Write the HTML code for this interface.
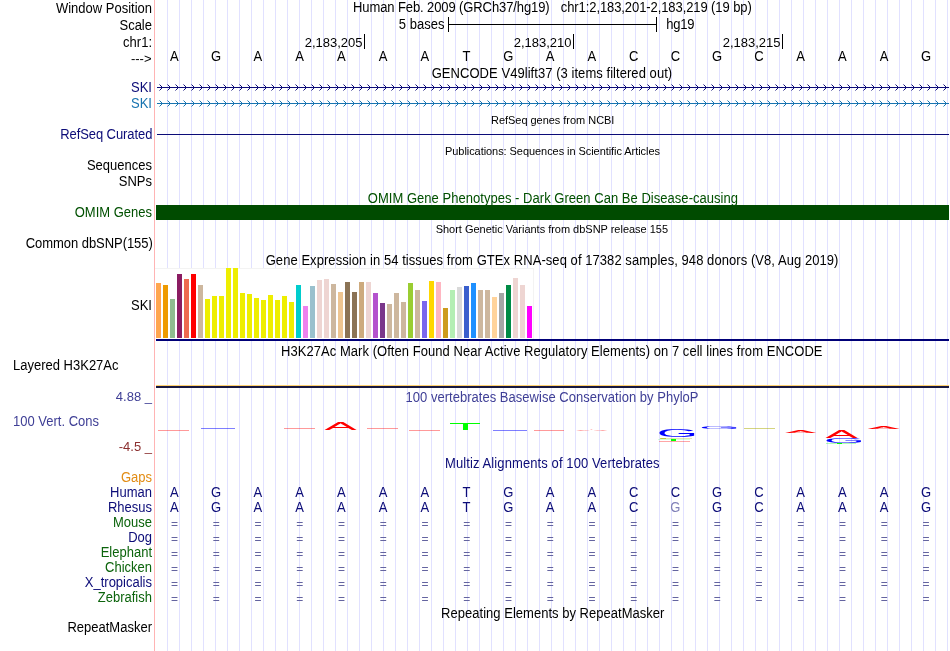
<!DOCTYPE html>
<html><head><meta charset="utf-8"><title>UCSC Genome Browser</title>
<style>
html,body{margin:0;padding:0;background:#fff;}
#c{will-change:transform;position:relative;width:950px;height:651px;overflow:hidden;background:#fff;font-family:"Liberation Sans",sans-serif;}
#c svg{position:absolute;left:0;top:0;}
.t{position:absolute;white-space:nowrap;transform:scaleY(1.075);}
</style></head><body><div id="c">
<svg width="950" height="651" viewBox="0 0 950 651" shape-rendering="auto">
<rect x="167" y="0" width="1" height="651" fill="#e1e1ff"/>
<rect x="179" y="0" width="1" height="651" fill="#e1e1ff"/>
<rect x="191" y="0" width="1" height="651" fill="#e1e1ff"/>
<rect x="203" y="0" width="1" height="651" fill="#e1e1ff"/>
<rect x="215" y="0" width="1" height="651" fill="#e1e1ff"/>
<rect x="227" y="0" width="1" height="651" fill="#e1e1ff"/>
<rect x="239" y="0" width="1" height="651" fill="#e1e1ff"/>
<rect x="251" y="0" width="1" height="651" fill="#e1e1ff"/>
<rect x="263" y="0" width="1" height="651" fill="#e1e1ff"/>
<rect x="275" y="0" width="1" height="651" fill="#e1e1ff"/>
<rect x="287" y="0" width="1" height="651" fill="#e1e1ff"/>
<rect x="299" y="0" width="1" height="651" fill="#e1e1ff"/>
<rect x="311" y="0" width="1" height="651" fill="#e1e1ff"/>
<rect x="323" y="0" width="1" height="651" fill="#e1e1ff"/>
<rect x="335" y="0" width="1" height="651" fill="#e1e1ff"/>
<rect x="347" y="0" width="1" height="651" fill="#e1e1ff"/>
<rect x="359" y="0" width="1" height="651" fill="#e1e1ff"/>
<rect x="371" y="0" width="1" height="651" fill="#e1e1ff"/>
<rect x="383" y="0" width="1" height="651" fill="#e1e1ff"/>
<rect x="395" y="0" width="1" height="651" fill="#e1e1ff"/>
<rect x="407" y="0" width="1" height="651" fill="#e1e1ff"/>
<rect x="419" y="0" width="1" height="651" fill="#e1e1ff"/>
<rect x="431" y="0" width="1" height="651" fill="#e1e1ff"/>
<rect x="443" y="0" width="1" height="651" fill="#e1e1ff"/>
<rect x="455" y="0" width="1" height="651" fill="#e1e1ff"/>
<rect x="467" y="0" width="1" height="651" fill="#e1e1ff"/>
<rect x="479" y="0" width="1" height="651" fill="#e1e1ff"/>
<rect x="491" y="0" width="1" height="651" fill="#e1e1ff"/>
<rect x="503" y="0" width="1" height="651" fill="#e1e1ff"/>
<rect x="515" y="0" width="1" height="651" fill="#e1e1ff"/>
<rect x="527" y="0" width="1" height="651" fill="#e1e1ff"/>
<rect x="539" y="0" width="1" height="651" fill="#e1e1ff"/>
<rect x="551" y="0" width="1" height="651" fill="#e1e1ff"/>
<rect x="563" y="0" width="1" height="651" fill="#e1e1ff"/>
<rect x="575" y="0" width="1" height="651" fill="#e1e1ff"/>
<rect x="587" y="0" width="1" height="651" fill="#e1e1ff"/>
<rect x="599" y="0" width="1" height="651" fill="#e1e1ff"/>
<rect x="611" y="0" width="1" height="651" fill="#e1e1ff"/>
<rect x="623" y="0" width="1" height="651" fill="#e1e1ff"/>
<rect x="635" y="0" width="1" height="651" fill="#e1e1ff"/>
<rect x="647" y="0" width="1" height="651" fill="#e1e1ff"/>
<rect x="659" y="0" width="1" height="651" fill="#e1e1ff"/>
<rect x="671" y="0" width="1" height="651" fill="#e1e1ff"/>
<rect x="683" y="0" width="1" height="651" fill="#e1e1ff"/>
<rect x="695" y="0" width="1" height="651" fill="#e1e1ff"/>
<rect x="707" y="0" width="1" height="651" fill="#e1e1ff"/>
<rect x="719" y="0" width="1" height="651" fill="#e1e1ff"/>
<rect x="731" y="0" width="1" height="651" fill="#e1e1ff"/>
<rect x="743" y="0" width="1" height="651" fill="#e1e1ff"/>
<rect x="755" y="0" width="1" height="651" fill="#e1e1ff"/>
<rect x="767" y="0" width="1" height="651" fill="#e1e1ff"/>
<rect x="779" y="0" width="1" height="651" fill="#e1e1ff"/>
<rect x="791" y="0" width="1" height="651" fill="#e1e1ff"/>
<rect x="803" y="0" width="1" height="651" fill="#e1e1ff"/>
<rect x="815" y="0" width="1" height="651" fill="#e1e1ff"/>
<rect x="827" y="0" width="1" height="651" fill="#e1e1ff"/>
<rect x="839" y="0" width="1" height="651" fill="#e1e1ff"/>
<rect x="851" y="0" width="1" height="651" fill="#e1e1ff"/>
<rect x="863" y="0" width="1" height="651" fill="#e1e1ff"/>
<rect x="875" y="0" width="1" height="651" fill="#e1e1ff"/>
<rect x="887" y="0" width="1" height="651" fill="#e1e1ff"/>
<rect x="899" y="0" width="1" height="651" fill="#e1e1ff"/>
<rect x="911" y="0" width="1" height="651" fill="#e1e1ff"/>
<rect x="923" y="0" width="1" height="651" fill="#e1e1ff"/>
<rect x="935" y="0" width="1" height="651" fill="#e1e1ff"/>
<rect x="947" y="0" width="1" height="651" fill="#e1e1ff"/>
<rect x="154" y="0" width="1" height="651" fill="#ffb4b4"/>
<rect x="448" y="24" width="209" height="1" fill="#000"/>
<rect x="448" y="17" width="1" height="15" fill="#000"/>
<rect x="656" y="17" width="1" height="15" fill="#000"/>
<rect x="364" y="34" width="1" height="15" fill="#000"/>
<rect x="573" y="34" width="1" height="15" fill="#000"/>
<rect x="782" y="34" width="1" height="15" fill="#000"/>
<rect x="157" y="87" width="792" height="1" fill="#0c0c78"/>
<path d="M159.5,84.5L162.5,87.5L159.5,90.5M167.5,84.5L170.5,87.5L167.5,90.5M175.5,84.5L178.5,87.5L175.5,90.5M183.5,84.5L186.5,87.5L183.5,90.5M191.5,84.5L194.5,87.5L191.5,90.5M199.5,84.5L202.5,87.5L199.5,90.5M207.5,84.5L210.5,87.5L207.5,90.5M215.5,84.5L218.5,87.5L215.5,90.5M223.5,84.5L226.5,87.5L223.5,90.5M231.5,84.5L234.5,87.5L231.5,90.5M239.5,84.5L242.5,87.5L239.5,90.5M247.5,84.5L250.5,87.5L247.5,90.5M255.5,84.5L258.5,87.5L255.5,90.5M263.5,84.5L266.5,87.5L263.5,90.5M271.5,84.5L274.5,87.5L271.5,90.5M279.5,84.5L282.5,87.5L279.5,90.5M287.5,84.5L290.5,87.5L287.5,90.5M295.5,84.5L298.5,87.5L295.5,90.5M303.5,84.5L306.5,87.5L303.5,90.5M311.5,84.5L314.5,87.5L311.5,90.5M319.5,84.5L322.5,87.5L319.5,90.5M327.5,84.5L330.5,87.5L327.5,90.5M335.5,84.5L338.5,87.5L335.5,90.5M343.5,84.5L346.5,87.5L343.5,90.5M351.5,84.5L354.5,87.5L351.5,90.5M359.5,84.5L362.5,87.5L359.5,90.5M367.5,84.5L370.5,87.5L367.5,90.5M375.5,84.5L378.5,87.5L375.5,90.5M383.5,84.5L386.5,87.5L383.5,90.5M391.5,84.5L394.5,87.5L391.5,90.5M399.5,84.5L402.5,87.5L399.5,90.5M407.5,84.5L410.5,87.5L407.5,90.5M415.5,84.5L418.5,87.5L415.5,90.5M423.5,84.5L426.5,87.5L423.5,90.5M431.5,84.5L434.5,87.5L431.5,90.5M439.5,84.5L442.5,87.5L439.5,90.5M447.5,84.5L450.5,87.5L447.5,90.5M455.5,84.5L458.5,87.5L455.5,90.5M463.5,84.5L466.5,87.5L463.5,90.5M471.5,84.5L474.5,87.5L471.5,90.5M479.5,84.5L482.5,87.5L479.5,90.5M487.5,84.5L490.5,87.5L487.5,90.5M495.5,84.5L498.5,87.5L495.5,90.5M503.5,84.5L506.5,87.5L503.5,90.5M511.5,84.5L514.5,87.5L511.5,90.5M519.5,84.5L522.5,87.5L519.5,90.5M527.5,84.5L530.5,87.5L527.5,90.5M535.5,84.5L538.5,87.5L535.5,90.5M543.5,84.5L546.5,87.5L543.5,90.5M551.5,84.5L554.5,87.5L551.5,90.5M559.5,84.5L562.5,87.5L559.5,90.5M567.5,84.5L570.5,87.5L567.5,90.5M575.5,84.5L578.5,87.5L575.5,90.5M583.5,84.5L586.5,87.5L583.5,90.5M591.5,84.5L594.5,87.5L591.5,90.5M599.5,84.5L602.5,87.5L599.5,90.5M607.5,84.5L610.5,87.5L607.5,90.5M615.5,84.5L618.5,87.5L615.5,90.5M623.5,84.5L626.5,87.5L623.5,90.5M631.5,84.5L634.5,87.5L631.5,90.5M639.5,84.5L642.5,87.5L639.5,90.5M647.5,84.5L650.5,87.5L647.5,90.5M655.5,84.5L658.5,87.5L655.5,90.5M663.5,84.5L666.5,87.5L663.5,90.5M671.5,84.5L674.5,87.5L671.5,90.5M679.5,84.5L682.5,87.5L679.5,90.5M687.5,84.5L690.5,87.5L687.5,90.5M695.5,84.5L698.5,87.5L695.5,90.5M703.5,84.5L706.5,87.5L703.5,90.5M711.5,84.5L714.5,87.5L711.5,90.5M719.5,84.5L722.5,87.5L719.5,90.5M727.5,84.5L730.5,87.5L727.5,90.5M735.5,84.5L738.5,87.5L735.5,90.5M743.5,84.5L746.5,87.5L743.5,90.5M751.5,84.5L754.5,87.5L751.5,90.5M759.5,84.5L762.5,87.5L759.5,90.5M767.5,84.5L770.5,87.5L767.5,90.5M775.5,84.5L778.5,87.5L775.5,90.5M783.5,84.5L786.5,87.5L783.5,90.5M791.5,84.5L794.5,87.5L791.5,90.5M799.5,84.5L802.5,87.5L799.5,90.5M807.5,84.5L810.5,87.5L807.5,90.5M815.5,84.5L818.5,87.5L815.5,90.5M823.5,84.5L826.5,87.5L823.5,90.5M831.5,84.5L834.5,87.5L831.5,90.5M839.5,84.5L842.5,87.5L839.5,90.5M847.5,84.5L850.5,87.5L847.5,90.5M855.5,84.5L858.5,87.5L855.5,90.5M863.5,84.5L866.5,87.5L863.5,90.5M871.5,84.5L874.5,87.5L871.5,90.5M879.5,84.5L882.5,87.5L879.5,90.5M887.5,84.5L890.5,87.5L887.5,90.5M895.5,84.5L898.5,87.5L895.5,90.5M903.5,84.5L906.5,87.5L903.5,90.5M911.5,84.5L914.5,87.5L911.5,90.5M919.5,84.5L922.5,87.5L919.5,90.5M927.5,84.5L930.5,87.5L927.5,90.5M935.5,84.5L938.5,87.5L935.5,90.5M943.5,84.5L946.5,87.5L943.5,90.5" stroke="#0c0c78" stroke-width="1" fill="none"/>
<rect x="157" y="103" width="792" height="1" fill="#1874b0"/>
<path d="M159.5,100.5L162.5,103.5L159.5,106.5M167.5,100.5L170.5,103.5L167.5,106.5M175.5,100.5L178.5,103.5L175.5,106.5M183.5,100.5L186.5,103.5L183.5,106.5M191.5,100.5L194.5,103.5L191.5,106.5M199.5,100.5L202.5,103.5L199.5,106.5M207.5,100.5L210.5,103.5L207.5,106.5M215.5,100.5L218.5,103.5L215.5,106.5M223.5,100.5L226.5,103.5L223.5,106.5M231.5,100.5L234.5,103.5L231.5,106.5M239.5,100.5L242.5,103.5L239.5,106.5M247.5,100.5L250.5,103.5L247.5,106.5M255.5,100.5L258.5,103.5L255.5,106.5M263.5,100.5L266.5,103.5L263.5,106.5M271.5,100.5L274.5,103.5L271.5,106.5M279.5,100.5L282.5,103.5L279.5,106.5M287.5,100.5L290.5,103.5L287.5,106.5M295.5,100.5L298.5,103.5L295.5,106.5M303.5,100.5L306.5,103.5L303.5,106.5M311.5,100.5L314.5,103.5L311.5,106.5M319.5,100.5L322.5,103.5L319.5,106.5M327.5,100.5L330.5,103.5L327.5,106.5M335.5,100.5L338.5,103.5L335.5,106.5M343.5,100.5L346.5,103.5L343.5,106.5M351.5,100.5L354.5,103.5L351.5,106.5M359.5,100.5L362.5,103.5L359.5,106.5M367.5,100.5L370.5,103.5L367.5,106.5M375.5,100.5L378.5,103.5L375.5,106.5M383.5,100.5L386.5,103.5L383.5,106.5M391.5,100.5L394.5,103.5L391.5,106.5M399.5,100.5L402.5,103.5L399.5,106.5M407.5,100.5L410.5,103.5L407.5,106.5M415.5,100.5L418.5,103.5L415.5,106.5M423.5,100.5L426.5,103.5L423.5,106.5M431.5,100.5L434.5,103.5L431.5,106.5M439.5,100.5L442.5,103.5L439.5,106.5M447.5,100.5L450.5,103.5L447.5,106.5M455.5,100.5L458.5,103.5L455.5,106.5M463.5,100.5L466.5,103.5L463.5,106.5M471.5,100.5L474.5,103.5L471.5,106.5M479.5,100.5L482.5,103.5L479.5,106.5M487.5,100.5L490.5,103.5L487.5,106.5M495.5,100.5L498.5,103.5L495.5,106.5M503.5,100.5L506.5,103.5L503.5,106.5M511.5,100.5L514.5,103.5L511.5,106.5M519.5,100.5L522.5,103.5L519.5,106.5M527.5,100.5L530.5,103.5L527.5,106.5M535.5,100.5L538.5,103.5L535.5,106.5M543.5,100.5L546.5,103.5L543.5,106.5M551.5,100.5L554.5,103.5L551.5,106.5M559.5,100.5L562.5,103.5L559.5,106.5M567.5,100.5L570.5,103.5L567.5,106.5M575.5,100.5L578.5,103.5L575.5,106.5M583.5,100.5L586.5,103.5L583.5,106.5M591.5,100.5L594.5,103.5L591.5,106.5M599.5,100.5L602.5,103.5L599.5,106.5M607.5,100.5L610.5,103.5L607.5,106.5M615.5,100.5L618.5,103.5L615.5,106.5M623.5,100.5L626.5,103.5L623.5,106.5M631.5,100.5L634.5,103.5L631.5,106.5M639.5,100.5L642.5,103.5L639.5,106.5M647.5,100.5L650.5,103.5L647.5,106.5M655.5,100.5L658.5,103.5L655.5,106.5M663.5,100.5L666.5,103.5L663.5,106.5M671.5,100.5L674.5,103.5L671.5,106.5M679.5,100.5L682.5,103.5L679.5,106.5M687.5,100.5L690.5,103.5L687.5,106.5M695.5,100.5L698.5,103.5L695.5,106.5M703.5,100.5L706.5,103.5L703.5,106.5M711.5,100.5L714.5,103.5L711.5,106.5M719.5,100.5L722.5,103.5L719.5,106.5M727.5,100.5L730.5,103.5L727.5,106.5M735.5,100.5L738.5,103.5L735.5,106.5M743.5,100.5L746.5,103.5L743.5,106.5M751.5,100.5L754.5,103.5L751.5,106.5M759.5,100.5L762.5,103.5L759.5,106.5M767.5,100.5L770.5,103.5L767.5,106.5M775.5,100.5L778.5,103.5L775.5,106.5M783.5,100.5L786.5,103.5L783.5,106.5M791.5,100.5L794.5,103.5L791.5,106.5M799.5,100.5L802.5,103.5L799.5,106.5M807.5,100.5L810.5,103.5L807.5,106.5M815.5,100.5L818.5,103.5L815.5,106.5M823.5,100.5L826.5,103.5L823.5,106.5M831.5,100.5L834.5,103.5L831.5,106.5M839.5,100.5L842.5,103.5L839.5,106.5M847.5,100.5L850.5,103.5L847.5,106.5M855.5,100.5L858.5,103.5L855.5,106.5M863.5,100.5L866.5,103.5L863.5,106.5M871.5,100.5L874.5,103.5L871.5,106.5M879.5,100.5L882.5,103.5L879.5,106.5M887.5,100.5L890.5,103.5L887.5,106.5M895.5,100.5L898.5,103.5L895.5,106.5M903.5,100.5L906.5,103.5L903.5,106.5M911.5,100.5L914.5,103.5L911.5,106.5M919.5,100.5L922.5,103.5L919.5,106.5M927.5,100.5L930.5,103.5L927.5,106.5M935.5,100.5L938.5,103.5L935.5,106.5M943.5,100.5L946.5,103.5L943.5,106.5" stroke="#1874b0" stroke-width="1" fill="none"/>
<rect x="157" y="134" width="792" height="1" fill="#0c0c78"/>
<rect x="156" y="205" width="793" height="15" fill="#004b00"/>
<rect x="155" y="268" width="379" height="71" fill="#fff"/>
<rect x="155" y="268" width="379" height="1" fill="#f3f3f3"/>
<rect x="533" y="268" width="1" height="71" fill="#f3f3f3"/>
<rect x="156" y="283" width="5" height="55" fill="#FFA54F"/>
<rect x="163" y="285" width="5" height="53" fill="#EE9A00"/>
<rect x="170" y="299" width="5" height="39" fill="#8FBC8F"/>
<rect x="177" y="274" width="5" height="64" fill="#8B1C62"/>
<rect x="184" y="279" width="5" height="59" fill="#EE6A50"/>
<rect x="191" y="274" width="5" height="64" fill="#FF0000"/>
<rect x="198" y="285" width="5" height="53" fill="#CDB79E"/>
<rect x="205" y="299" width="5" height="39" fill="#EEEE00"/>
<rect x="212" y="296" width="5" height="42" fill="#EEEE00"/>
<rect x="219" y="296" width="5" height="42" fill="#EEEE00"/>
<rect x="226" y="268" width="5" height="70" fill="#EEEE00"/>
<rect x="233" y="268" width="5" height="70" fill="#EEEE00"/>
<rect x="240" y="293" width="5" height="45" fill="#EEEE00"/>
<rect x="247" y="294" width="5" height="44" fill="#EEEE00"/>
<rect x="254" y="298" width="5" height="40" fill="#EEEE00"/>
<rect x="261" y="300" width="5" height="38" fill="#EEEE00"/>
<rect x="268" y="295" width="5" height="43" fill="#EEEE00"/>
<rect x="275" y="300" width="5" height="38" fill="#EEEE00"/>
<rect x="282" y="296" width="5" height="42" fill="#EEEE00"/>
<rect x="289" y="302" width="5" height="36" fill="#EEEE00"/>
<rect x="296" y="285" width="5" height="53" fill="#00CDCD"/>
<rect x="303" y="306" width="5" height="32" fill="#EE82EE"/>
<rect x="310" y="286" width="5" height="52" fill="#9AC0CD"/>
<rect x="317" y="280" width="5" height="58" fill="#EED5D2"/>
<rect x="324" y="279" width="5" height="59" fill="#EED5D2"/>
<rect x="331" y="284" width="5" height="54" fill="#CDB79E"/>
<rect x="338" y="292" width="5" height="46" fill="#EEC591"/>
<rect x="345" y="282" width="5" height="56" fill="#8B7355"/>
<rect x="352" y="292" width="5" height="46" fill="#8B7355"/>
<rect x="359" y="282" width="5" height="56" fill="#CDAA7D"/>
<rect x="366" y="282" width="5" height="56" fill="#EED5D2"/>
<rect x="373" y="293" width="5" height="45" fill="#B452CD"/>
<rect x="380" y="303" width="5" height="35" fill="#7A378B"/>
<rect x="387" y="304" width="5" height="34" fill="#CDB79E"/>
<rect x="394" y="293" width="5" height="45" fill="#CDB79E"/>
<rect x="401" y="302" width="5" height="36" fill="#CDB79E"/>
<rect x="408" y="283" width="5" height="55" fill="#9ACD32"/>
<rect x="415" y="290" width="5" height="48" fill="#CDB79E"/>
<rect x="422" y="301" width="5" height="37" fill="#7A67EE"/>
<rect x="429" y="281" width="5" height="57" fill="#FFD700"/>
<rect x="436" y="282" width="5" height="56" fill="#FFB6C1"/>
<rect x="443" y="308" width="5" height="30" fill="#CD9B1D"/>
<rect x="450" y="290" width="5" height="48" fill="#B4EEB4"/>
<rect x="457" y="287" width="5" height="51" fill="#D9D9D9"/>
<rect x="464" y="286" width="5" height="52" fill="#3A5FCD"/>
<rect x="471" y="283" width="5" height="55" fill="#1E90FF"/>
<rect x="478" y="290" width="5" height="48" fill="#CDB79E"/>
<rect x="485" y="290" width="5" height="48" fill="#CDB79E"/>
<rect x="492" y="297" width="5" height="41" fill="#FFD39B"/>
<rect x="499" y="293" width="5" height="45" fill="#A6A6A6"/>
<rect x="506" y="285" width="5" height="53" fill="#008B45"/>
<rect x="513" y="278" width="5" height="60" fill="#EED5D2"/>
<rect x="520" y="285" width="5" height="53" fill="#EED5D2"/>
<rect x="527" y="306" width="5" height="32" fill="#FF00FF"/>
<rect x="156" y="339" width="793" height="2" fill="#000078"/>
<rect x="156" y="385" width="793" height="1" fill="#ffd070"/>
<rect x="156" y="386" width="793" height="2" fill="#181840"/>
<rect x="158.0" y="430" width="31.0" height="1" fill="#ff0000" opacity="0.4"/>
<rect x="201.0" y="428" width="34.0" height="1" fill="#0000ff" opacity="0.5"/>
<rect x="284.0" y="428" width="31.0" height="1" fill="#ff0000" opacity="0.4"/>
<text transform="translate(324.50,430.00) scale(2.413,0.509)" x="-0.04" y="0.00" font-size="20.0" font-family="Liberation Sans,sans-serif" fill="#ff0000">A</text>
<rect x="367.0" y="428" width="31.0" height="1" fill="#ff0000" opacity="0.4"/>
<rect x="409.0" y="430" width="31.0" height="1" fill="#ff0000" opacity="0.4"/>
<rect x="450" y="423" width="30" height="1" fill="#00ff00"/>
<rect x="463" y="424" width="5" height="6" fill="#00ff00"/>
<rect x="493.0" y="430" width="34.0" height="1" fill="#0000ff" opacity="0.5"/>
<rect x="534.0" y="430" width="30.0" height="1" fill="#ff0000" opacity="0.4"/>
<text transform="translate(576.00,431.40) scale(2.376,0.124)" x="-0.04" y="0.00" font-size="20.0" font-family="Liberation Sans,sans-serif" fill="#ff0000">A</text>
<text transform="translate(659.30,437.00) scale(2.657,0.544)" x="-1.00" y="-0.20" font-size="20.0" font-family="Liberation Sans,sans-serif" fill="#0000ff">G</text>
<rect x="661.0" y="438" width="31.0" height="1" fill="#aaaa00" opacity="0.3"/>
<rect x="660.0" y="438" width="6.0" height="1" fill="#aaaa00" opacity="0.6"/>
<rect x="658" y="439" width="32" height="1" fill="#00ff00" opacity="0.15"/>
<rect x="671" y="439" width="5" height="2" fill="#00ff00"/>
<rect x="659.0" y="441" width="31.0" height="1" fill="#ff0000" opacity="0.35"/>
<text transform="translate(701.50,429.00) scale(2.642,0.212)" x="-1.00" y="-0.20" font-size="20.0" font-family="Liberation Sans,sans-serif" fill="#0000ff">G</text>
<rect x="744.0" y="428" width="31.0" height="1" fill="#aaaa00" opacity="0.5"/>
<text transform="translate(785.00,433.00) scale(2.338,0.218)" x="-0.04" y="0.00" font-size="20.0" font-family="Liberation Sans,sans-serif" fill="#ff0000">A</text>
<text transform="translate(825.50,438.00) scale(2.413,0.581)" x="-0.04" y="0.00" font-size="20.0" font-family="Liberation Sans,sans-serif" fill="#ff0000">A</text>
<text transform="translate(826.50,443.00) scale(2.642,0.353)" x="-1.00" y="-0.20" font-size="20.0" font-family="Liberation Sans,sans-serif" fill="#0000ff">G</text>
<rect x="826" y="443" width="30" height="1" fill="#00ff00" opacity="0.3"/>
<rect x="837" y="443" width="5" height="1" fill="#00ff00"/>
<text transform="translate(867.50,429.00) scale(2.413,0.218)" x="-0.04" y="0.00" font-size="20.0" font-family="Liberation Sans,sans-serif" fill="#ff0000">A</text>
</svg>
<div class="t" style="top:1.00px;font-size:13px;line-height:15px;color:#000;transform-origin:0 12.00px;right:798px;">Window Position</div>
<div class="t" style="top:-0.00px;font-size:13px;line-height:15px;color:#000;transform-origin:0 12.00px;letter-spacing:-0.104px;left:353.08500000000004px;">Human Feb. 2009 (GRCh37/hg19)</div>
<div class="t" style="top:-0.00px;font-size:13px;line-height:15px;color:#000;transform-origin:0 12.00px;letter-spacing:-0.087px;left:560.785px;">chr1:2,183,201-2,183,219 (19 bp)</div>
<div class="t" style="top:18.00px;font-size:13px;line-height:15px;color:#000;transform-origin:0 12.00px;right:798px;">Scale</div>
<div class="t" style="top:17.00px;font-size:13px;line-height:15px;color:#000;transform-origin:0 12.00px;letter-spacing:0.026px;left:398.785px;">5 bases</div>
<div class="t" style="top:17.00px;font-size:13px;line-height:15px;color:#000;transform-origin:0 12.00px;letter-spacing:-0.223px;left:666.285px;">hg19</div>
<div class="t" style="top:35.00px;font-size:13px;line-height:15px;color:#000;transform-origin:0 12.00px;right:798px;">chr1:</div>
<div class="t" style="top:35.00px;font-size:13px;line-height:15px;color:#000;transform-origin:0 12.00px;transform:none;right:587.5px;">2,183,205</div>
<div class="t" style="top:35.00px;font-size:13px;line-height:15px;color:#000;transform-origin:0 12.00px;transform:none;right:378.5px;">2,183,210</div>
<div class="t" style="top:35.00px;font-size:13px;line-height:15px;color:#000;transform-origin:0 12.00px;transform:none;right:169.5px;">2,183,215</div>
<div class="t" style="top:51.00px;font-size:13px;line-height:15px;color:#000;transform-origin:0 12.00px;transform:none;right:798.5px;">---&gt;</div>
<div class="t" style="top:49.00px;font-size:13px;line-height:15px;color:#000;transform-origin:0 12.00px;left:-225.75px;width:800px;text-align:center;">A</div>
<div class="t" style="top:49.00px;font-size:13px;line-height:15px;color:#000;transform-origin:0 12.00px;left:-183.988px;width:800px;text-align:center;">G</div>
<div class="t" style="top:49.00px;font-size:13px;line-height:15px;color:#000;transform-origin:0 12.00px;left:-142.226px;width:800px;text-align:center;">A</div>
<div class="t" style="top:49.00px;font-size:13px;line-height:15px;color:#000;transform-origin:0 12.00px;left:-100.464px;width:800px;text-align:center;">A</div>
<div class="t" style="top:49.00px;font-size:13px;line-height:15px;color:#000;transform-origin:0 12.00px;left:-58.702px;width:800px;text-align:center;">A</div>
<div class="t" style="top:49.00px;font-size:13px;line-height:15px;color:#000;transform-origin:0 12.00px;left:-16.939999999999998px;width:800px;text-align:center;">A</div>
<div class="t" style="top:49.00px;font-size:13px;line-height:15px;color:#000;transform-origin:0 12.00px;left:24.822000000000003px;width:800px;text-align:center;">A</div>
<div class="t" style="top:49.00px;font-size:13px;line-height:15px;color:#000;transform-origin:0 12.00px;left:66.584px;width:800px;text-align:center;">T</div>
<div class="t" style="top:49.00px;font-size:13px;line-height:15px;color:#000;transform-origin:0 12.00px;left:108.346px;width:800px;text-align:center;">G</div>
<div class="t" style="top:49.00px;font-size:13px;line-height:15px;color:#000;transform-origin:0 12.00px;left:150.10799999999995px;width:800px;text-align:center;">A</div>
<div class="t" style="top:49.00px;font-size:13px;line-height:15px;color:#000;transform-origin:0 12.00px;left:191.87px;width:800px;text-align:center;">A</div>
<div class="t" style="top:49.00px;font-size:13px;line-height:15px;color:#000;transform-origin:0 12.00px;left:233.63200000000006px;width:800px;text-align:center;">C</div>
<div class="t" style="top:49.00px;font-size:13px;line-height:15px;color:#000;transform-origin:0 12.00px;left:275.394px;width:800px;text-align:center;">C</div>
<div class="t" style="top:49.00px;font-size:13px;line-height:15px;color:#000;transform-origin:0 12.00px;left:317.15599999999995px;width:800px;text-align:center;">G</div>
<div class="t" style="top:49.00px;font-size:13px;line-height:15px;color:#000;transform-origin:0 12.00px;left:358.918px;width:800px;text-align:center;">C</div>
<div class="t" style="top:49.00px;font-size:13px;line-height:15px;color:#000;transform-origin:0 12.00px;left:400.68000000000006px;width:800px;text-align:center;">A</div>
<div class="t" style="top:49.00px;font-size:13px;line-height:15px;color:#000;transform-origin:0 12.00px;left:442.442px;width:800px;text-align:center;">A</div>
<div class="t" style="top:49.00px;font-size:13px;line-height:15px;color:#000;transform-origin:0 12.00px;left:484.20399999999995px;width:800px;text-align:center;">A</div>
<div class="t" style="top:49.00px;font-size:13px;line-height:15px;color:#000;transform-origin:0 12.00px;left:525.966px;width:800px;text-align:center;">G</div>
<div class="t" style="top:66.00px;font-size:13px;line-height:15px;color:#000;transform-origin:0 12.00px;letter-spacing:0.053px;left:431.685px;">GENCODE V49lift37 (3 items filtered out)</div>
<div class="t" style="top:80.00px;font-size:13px;line-height:15px;color:#0c0c78;transform-origin:0 12.00px;right:798px;">SKI</div>
<div class="t" style="top:96.00px;font-size:13px;line-height:15px;color:#1874b0;transform-origin:0 12.00px;right:798px;">SKI</div>
<div class="t" style="top:113.69px;font-size:11px;line-height:13px;color:#000;transform-origin:0 10.31px;letter-spacing:-0.033px;left:490.995px;">RefSeq genes from NCBI</div>
<div class="t" style="top:127.00px;font-size:13px;line-height:15px;color:#0c0c78;transform-origin:0 12.00px;letter-spacing:-0.079px;left:60.184999999999995px;">RefSeq Curated</div>
<div class="t" style="top:144.69px;font-size:11px;line-height:13px;color:#000;transform-origin:0 10.31px;letter-spacing:-0.060px;left:444.995px;">Publications: Sequences in Scientific Articles</div>
<div class="t" style="top:158.00px;font-size:13px;line-height:15px;color:#000;transform-origin:0 12.00px;right:798px;">Sequences</div>
<div class="t" style="top:174.00px;font-size:13px;line-height:15px;color:#000;transform-origin:0 12.00px;right:798px;">SNPs</div>
<div class="t" style="top:191.00px;font-size:13px;line-height:15px;color:#005000;transform-origin:0 12.00px;letter-spacing:0.031px;left:367.785px;">OMIM Gene Phenotypes - Dark Green Can Be Disease-causing</div>
<div class="t" style="top:205.00px;font-size:13px;line-height:15px;color:#005000;transform-origin:0 12.00px;right:798px;">OMIM Genes</div>
<div class="t" style="top:222.69px;font-size:11px;line-height:13px;color:#000;transform-origin:0 10.31px;letter-spacing:-0.019px;left:435.695px;">Short Genetic Variants from dbSNP release 155</div>
<div class="t" style="top:236.00px;font-size:13px;line-height:15px;color:#000;transform-origin:0 12.00px;letter-spacing:-0.057px;left:25.785px;">Common dbSNP(155)</div>
<div class="t" style="top:253.00px;font-size:13px;line-height:15px;color:#000;transform-origin:0 12.00px;letter-spacing:0.061px;left:265.685px;">Gene Expression in 54 tissues from GTEx RNA-seq of 17382 samples, 948 donors (V8, Aug 2019)</div>
<div class="t" style="top:298.00px;font-size:13px;line-height:15px;color:#000;transform-origin:0 12.00px;right:798px;">SKI</div>
<div class="t" style="top:344.00px;font-size:13px;line-height:15px;color:#000;transform-origin:0 12.00px;letter-spacing:0.047px;left:280.985px;">H3K27Ac Mark (Often Found Near Active Regulatory Elements) on 7 cell lines from ENCODE</div>
<div class="t" style="top:358.00px;font-size:13px;line-height:15px;color:#000;transform-origin:0 12.00px;left:13px;">Layered H3K27Ac</div>
<div class="t" style="top:389.00px;font-size:13px;line-height:15px;color:#3f3f96;transform-origin:0 12.00px;transform:none;right:798px;">4.88 _</div>
<div class="t" style="top:390.00px;font-size:13px;line-height:15px;color:#3f3f96;transform-origin:0 12.00px;letter-spacing:0.021px;left:405.58500000000004px;">100 vertebrates Basewise Conservation by PhyloP</div>
<div class="t" style="top:414.00px;font-size:13px;line-height:15px;color:#3f3f96;transform-origin:0 12.00px;left:13px;">100 Vert. Cons</div>
<div class="t" style="top:439.00px;font-size:13px;line-height:15px;color:#8c3030;transform-origin:0 12.00px;transform:none;right:798px;">-4.5 _</div>
<div class="t" style="top:456.00px;font-size:13px;line-height:15px;color:#0c0c78;transform-origin:0 12.00px;letter-spacing:0.098px;left:445.08500000000004px;">Multiz Alignments of 100 Vertebrates</div>
<div class="t" style="top:470.00px;font-size:13px;line-height:15px;color:#e28c14;transform-origin:0 12.00px;right:798px;">Gaps</div>
<div class="t" style="top:485.00px;font-size:13px;line-height:15px;color:#0c0c78;transform-origin:0 12.00px;right:798px;">Human</div>
<div class="t" style="top:485.00px;font-size:13px;line-height:15px;color:#0c0c78;transform-origin:0 12.00px;left:-225.75px;width:800px;text-align:center;">A</div>
<div class="t" style="top:485.00px;font-size:13px;line-height:15px;color:#0c0c78;transform-origin:0 12.00px;left:-183.988px;width:800px;text-align:center;">G</div>
<div class="t" style="top:485.00px;font-size:13px;line-height:15px;color:#0c0c78;transform-origin:0 12.00px;left:-142.226px;width:800px;text-align:center;">A</div>
<div class="t" style="top:485.00px;font-size:13px;line-height:15px;color:#0c0c78;transform-origin:0 12.00px;left:-100.464px;width:800px;text-align:center;">A</div>
<div class="t" style="top:485.00px;font-size:13px;line-height:15px;color:#0c0c78;transform-origin:0 12.00px;left:-58.702px;width:800px;text-align:center;">A</div>
<div class="t" style="top:485.00px;font-size:13px;line-height:15px;color:#0c0c78;transform-origin:0 12.00px;left:-16.939999999999998px;width:800px;text-align:center;">A</div>
<div class="t" style="top:485.00px;font-size:13px;line-height:15px;color:#0c0c78;transform-origin:0 12.00px;left:24.822000000000003px;width:800px;text-align:center;">A</div>
<div class="t" style="top:485.00px;font-size:13px;line-height:15px;color:#0c0c78;transform-origin:0 12.00px;left:66.584px;width:800px;text-align:center;">T</div>
<div class="t" style="top:485.00px;font-size:13px;line-height:15px;color:#0c0c78;transform-origin:0 12.00px;left:108.346px;width:800px;text-align:center;">G</div>
<div class="t" style="top:485.00px;font-size:13px;line-height:15px;color:#0c0c78;transform-origin:0 12.00px;left:150.10799999999995px;width:800px;text-align:center;">A</div>
<div class="t" style="top:485.00px;font-size:13px;line-height:15px;color:#0c0c78;transform-origin:0 12.00px;left:191.87px;width:800px;text-align:center;">A</div>
<div class="t" style="top:485.00px;font-size:13px;line-height:15px;color:#0c0c78;transform-origin:0 12.00px;left:233.63200000000006px;width:800px;text-align:center;">C</div>
<div class="t" style="top:485.00px;font-size:13px;line-height:15px;color:#0c0c78;transform-origin:0 12.00px;left:275.394px;width:800px;text-align:center;">C</div>
<div class="t" style="top:485.00px;font-size:13px;line-height:15px;color:#0c0c78;transform-origin:0 12.00px;left:317.15599999999995px;width:800px;text-align:center;">G</div>
<div class="t" style="top:485.00px;font-size:13px;line-height:15px;color:#0c0c78;transform-origin:0 12.00px;left:358.918px;width:800px;text-align:center;">C</div>
<div class="t" style="top:485.00px;font-size:13px;line-height:15px;color:#0c0c78;transform-origin:0 12.00px;left:400.68000000000006px;width:800px;text-align:center;">A</div>
<div class="t" style="top:485.00px;font-size:13px;line-height:15px;color:#0c0c78;transform-origin:0 12.00px;left:442.442px;width:800px;text-align:center;">A</div>
<div class="t" style="top:485.00px;font-size:13px;line-height:15px;color:#0c0c78;transform-origin:0 12.00px;left:484.20399999999995px;width:800px;text-align:center;">A</div>
<div class="t" style="top:485.00px;font-size:13px;line-height:15px;color:#0c0c78;transform-origin:0 12.00px;left:525.966px;width:800px;text-align:center;">G</div>
<div class="t" style="top:500.00px;font-size:13px;line-height:15px;color:#0c0c78;transform-origin:0 12.00px;right:798px;">Rhesus</div>
<div class="t" style="top:500.00px;font-size:13px;line-height:15px;color:#0c0c78;transform-origin:0 12.00px;left:-225.75px;width:800px;text-align:center;">A</div>
<div class="t" style="top:500.00px;font-size:13px;line-height:15px;color:#0c0c78;transform-origin:0 12.00px;left:-183.988px;width:800px;text-align:center;">G</div>
<div class="t" style="top:500.00px;font-size:13px;line-height:15px;color:#0c0c78;transform-origin:0 12.00px;left:-142.226px;width:800px;text-align:center;">A</div>
<div class="t" style="top:500.00px;font-size:13px;line-height:15px;color:#0c0c78;transform-origin:0 12.00px;left:-100.464px;width:800px;text-align:center;">A</div>
<div class="t" style="top:500.00px;font-size:13px;line-height:15px;color:#0c0c78;transform-origin:0 12.00px;left:-58.702px;width:800px;text-align:center;">A</div>
<div class="t" style="top:500.00px;font-size:13px;line-height:15px;color:#0c0c78;transform-origin:0 12.00px;left:-16.939999999999998px;width:800px;text-align:center;">A</div>
<div class="t" style="top:500.00px;font-size:13px;line-height:15px;color:#0c0c78;transform-origin:0 12.00px;left:24.822000000000003px;width:800px;text-align:center;">A</div>
<div class="t" style="top:500.00px;font-size:13px;line-height:15px;color:#0c0c78;transform-origin:0 12.00px;left:66.584px;width:800px;text-align:center;">T</div>
<div class="t" style="top:500.00px;font-size:13px;line-height:15px;color:#0c0c78;transform-origin:0 12.00px;left:108.346px;width:800px;text-align:center;">G</div>
<div class="t" style="top:500.00px;font-size:13px;line-height:15px;color:#0c0c78;transform-origin:0 12.00px;left:150.10799999999995px;width:800px;text-align:center;">A</div>
<div class="t" style="top:500.00px;font-size:13px;line-height:15px;color:#0c0c78;transform-origin:0 12.00px;left:191.87px;width:800px;text-align:center;">A</div>
<div class="t" style="top:500.00px;font-size:13px;line-height:15px;color:#0c0c78;transform-origin:0 12.00px;left:233.63200000000006px;width:800px;text-align:center;">C</div>
<div class="t" style="top:500.00px;font-size:13px;line-height:15px;color:#8080b8;transform-origin:0 12.00px;left:275.394px;width:800px;text-align:center;">G</div>
<div class="t" style="top:500.00px;font-size:13px;line-height:15px;color:#0c0c78;transform-origin:0 12.00px;left:317.15599999999995px;width:800px;text-align:center;">G</div>
<div class="t" style="top:500.00px;font-size:13px;line-height:15px;color:#0c0c78;transform-origin:0 12.00px;left:358.918px;width:800px;text-align:center;">C</div>
<div class="t" style="top:500.00px;font-size:13px;line-height:15px;color:#0c0c78;transform-origin:0 12.00px;left:400.68000000000006px;width:800px;text-align:center;">A</div>
<div class="t" style="top:500.00px;font-size:13px;line-height:15px;color:#0c0c78;transform-origin:0 12.00px;left:442.442px;width:800px;text-align:center;">A</div>
<div class="t" style="top:500.00px;font-size:13px;line-height:15px;color:#0c0c78;transform-origin:0 12.00px;left:484.20399999999995px;width:800px;text-align:center;">A</div>
<div class="t" style="top:500.00px;font-size:13px;line-height:15px;color:#0c0c78;transform-origin:0 12.00px;left:525.966px;width:800px;text-align:center;">G</div>
<div class="t" style="top:515.00px;font-size:13px;line-height:15px;color:#0c640c;transform-origin:0 12.00px;right:798px;">Mouse</div>
<div class="t" style="top:516.84px;font-size:12px;line-height:14px;color:#6464a0;transform-origin:0 11.16px;transform:none;left:-225.6px;width:800px;text-align:center;">=</div>
<div class="t" style="top:516.84px;font-size:12px;line-height:14px;color:#6464a0;transform-origin:0 11.16px;transform:none;left:-183.838px;width:800px;text-align:center;">=</div>
<div class="t" style="top:516.84px;font-size:12px;line-height:14px;color:#6464a0;transform-origin:0 11.16px;transform:none;left:-142.07600000000002px;width:800px;text-align:center;">=</div>
<div class="t" style="top:516.84px;font-size:12px;line-height:14px;color:#6464a0;transform-origin:0 11.16px;transform:none;left:-100.31399999999996px;width:800px;text-align:center;">=</div>
<div class="t" style="top:516.84px;font-size:12px;line-height:14px;color:#6464a0;transform-origin:0 11.16px;transform:none;left:-58.55200000000002px;width:800px;text-align:center;">=</div>
<div class="t" style="top:516.84px;font-size:12px;line-height:14px;color:#6464a0;transform-origin:0 11.16px;transform:none;left:-16.789999999999964px;width:800px;text-align:center;">=</div>
<div class="t" style="top:516.84px;font-size:12px;line-height:14px;color:#6464a0;transform-origin:0 11.16px;transform:none;left:24.97199999999998px;width:800px;text-align:center;">=</div>
<div class="t" style="top:516.84px;font-size:12px;line-height:14px;color:#6464a0;transform-origin:0 11.16px;transform:none;left:66.73400000000004px;width:800px;text-align:center;">=</div>
<div class="t" style="top:516.84px;font-size:12px;line-height:14px;color:#6464a0;transform-origin:0 11.16px;transform:none;left:108.49599999999998px;width:800px;text-align:center;">=</div>
<div class="t" style="top:516.84px;font-size:12px;line-height:14px;color:#6464a0;transform-origin:0 11.16px;transform:none;left:150.25800000000004px;width:800px;text-align:center;">=</div>
<div class="t" style="top:516.84px;font-size:12px;line-height:14px;color:#6464a0;transform-origin:0 11.16px;transform:none;left:192.01999999999998px;width:800px;text-align:center;">=</div>
<div class="t" style="top:516.84px;font-size:12px;line-height:14px;color:#6464a0;transform-origin:0 11.16px;transform:none;left:233.78200000000004px;width:800px;text-align:center;">=</div>
<div class="t" style="top:516.84px;font-size:12px;line-height:14px;color:#6464a0;transform-origin:0 11.16px;transform:none;left:275.544px;width:800px;text-align:center;">=</div>
<div class="t" style="top:516.84px;font-size:12px;line-height:14px;color:#6464a0;transform-origin:0 11.16px;transform:none;left:317.3059999999999px;width:800px;text-align:center;">=</div>
<div class="t" style="top:516.84px;font-size:12px;line-height:14px;color:#6464a0;transform-origin:0 11.16px;transform:none;left:359.068px;width:800px;text-align:center;">=</div>
<div class="t" style="top:516.84px;font-size:12px;line-height:14px;color:#6464a0;transform-origin:0 11.16px;transform:none;left:400.83000000000004px;width:800px;text-align:center;">=</div>
<div class="t" style="top:516.84px;font-size:12px;line-height:14px;color:#6464a0;transform-origin:0 11.16px;transform:none;left:442.592px;width:800px;text-align:center;">=</div>
<div class="t" style="top:516.84px;font-size:12px;line-height:14px;color:#6464a0;transform-origin:0 11.16px;transform:none;left:484.3539999999999px;width:800px;text-align:center;">=</div>
<div class="t" style="top:516.84px;font-size:12px;line-height:14px;color:#6464a0;transform-origin:0 11.16px;transform:none;left:526.116px;width:800px;text-align:center;">=</div>
<div class="t" style="top:530.00px;font-size:13px;line-height:15px;color:#0c0c78;transform-origin:0 12.00px;right:798px;">Dog</div>
<div class="t" style="top:531.84px;font-size:12px;line-height:14px;color:#6464a0;transform-origin:0 11.16px;transform:none;left:-225.6px;width:800px;text-align:center;">=</div>
<div class="t" style="top:531.84px;font-size:12px;line-height:14px;color:#6464a0;transform-origin:0 11.16px;transform:none;left:-183.838px;width:800px;text-align:center;">=</div>
<div class="t" style="top:531.84px;font-size:12px;line-height:14px;color:#6464a0;transform-origin:0 11.16px;transform:none;left:-142.07600000000002px;width:800px;text-align:center;">=</div>
<div class="t" style="top:531.84px;font-size:12px;line-height:14px;color:#6464a0;transform-origin:0 11.16px;transform:none;left:-100.31399999999996px;width:800px;text-align:center;">=</div>
<div class="t" style="top:531.84px;font-size:12px;line-height:14px;color:#6464a0;transform-origin:0 11.16px;transform:none;left:-58.55200000000002px;width:800px;text-align:center;">=</div>
<div class="t" style="top:531.84px;font-size:12px;line-height:14px;color:#6464a0;transform-origin:0 11.16px;transform:none;left:-16.789999999999964px;width:800px;text-align:center;">=</div>
<div class="t" style="top:531.84px;font-size:12px;line-height:14px;color:#6464a0;transform-origin:0 11.16px;transform:none;left:24.97199999999998px;width:800px;text-align:center;">=</div>
<div class="t" style="top:531.84px;font-size:12px;line-height:14px;color:#6464a0;transform-origin:0 11.16px;transform:none;left:66.73400000000004px;width:800px;text-align:center;">=</div>
<div class="t" style="top:531.84px;font-size:12px;line-height:14px;color:#6464a0;transform-origin:0 11.16px;transform:none;left:108.49599999999998px;width:800px;text-align:center;">=</div>
<div class="t" style="top:531.84px;font-size:12px;line-height:14px;color:#6464a0;transform-origin:0 11.16px;transform:none;left:150.25800000000004px;width:800px;text-align:center;">=</div>
<div class="t" style="top:531.84px;font-size:12px;line-height:14px;color:#6464a0;transform-origin:0 11.16px;transform:none;left:192.01999999999998px;width:800px;text-align:center;">=</div>
<div class="t" style="top:531.84px;font-size:12px;line-height:14px;color:#6464a0;transform-origin:0 11.16px;transform:none;left:233.78200000000004px;width:800px;text-align:center;">=</div>
<div class="t" style="top:531.84px;font-size:12px;line-height:14px;color:#6464a0;transform-origin:0 11.16px;transform:none;left:275.544px;width:800px;text-align:center;">=</div>
<div class="t" style="top:531.84px;font-size:12px;line-height:14px;color:#6464a0;transform-origin:0 11.16px;transform:none;left:317.3059999999999px;width:800px;text-align:center;">=</div>
<div class="t" style="top:531.84px;font-size:12px;line-height:14px;color:#6464a0;transform-origin:0 11.16px;transform:none;left:359.068px;width:800px;text-align:center;">=</div>
<div class="t" style="top:531.84px;font-size:12px;line-height:14px;color:#6464a0;transform-origin:0 11.16px;transform:none;left:400.83000000000004px;width:800px;text-align:center;">=</div>
<div class="t" style="top:531.84px;font-size:12px;line-height:14px;color:#6464a0;transform-origin:0 11.16px;transform:none;left:442.592px;width:800px;text-align:center;">=</div>
<div class="t" style="top:531.84px;font-size:12px;line-height:14px;color:#6464a0;transform-origin:0 11.16px;transform:none;left:484.3539999999999px;width:800px;text-align:center;">=</div>
<div class="t" style="top:531.84px;font-size:12px;line-height:14px;color:#6464a0;transform-origin:0 11.16px;transform:none;left:526.116px;width:800px;text-align:center;">=</div>
<div class="t" style="top:545.00px;font-size:13px;line-height:15px;color:#0c640c;transform-origin:0 12.00px;right:798px;">Elephant</div>
<div class="t" style="top:546.84px;font-size:12px;line-height:14px;color:#6464a0;transform-origin:0 11.16px;transform:none;left:-225.6px;width:800px;text-align:center;">=</div>
<div class="t" style="top:546.84px;font-size:12px;line-height:14px;color:#6464a0;transform-origin:0 11.16px;transform:none;left:-183.838px;width:800px;text-align:center;">=</div>
<div class="t" style="top:546.84px;font-size:12px;line-height:14px;color:#6464a0;transform-origin:0 11.16px;transform:none;left:-142.07600000000002px;width:800px;text-align:center;">=</div>
<div class="t" style="top:546.84px;font-size:12px;line-height:14px;color:#6464a0;transform-origin:0 11.16px;transform:none;left:-100.31399999999996px;width:800px;text-align:center;">=</div>
<div class="t" style="top:546.84px;font-size:12px;line-height:14px;color:#6464a0;transform-origin:0 11.16px;transform:none;left:-58.55200000000002px;width:800px;text-align:center;">=</div>
<div class="t" style="top:546.84px;font-size:12px;line-height:14px;color:#6464a0;transform-origin:0 11.16px;transform:none;left:-16.789999999999964px;width:800px;text-align:center;">=</div>
<div class="t" style="top:546.84px;font-size:12px;line-height:14px;color:#6464a0;transform-origin:0 11.16px;transform:none;left:24.97199999999998px;width:800px;text-align:center;">=</div>
<div class="t" style="top:546.84px;font-size:12px;line-height:14px;color:#6464a0;transform-origin:0 11.16px;transform:none;left:66.73400000000004px;width:800px;text-align:center;">=</div>
<div class="t" style="top:546.84px;font-size:12px;line-height:14px;color:#6464a0;transform-origin:0 11.16px;transform:none;left:108.49599999999998px;width:800px;text-align:center;">=</div>
<div class="t" style="top:546.84px;font-size:12px;line-height:14px;color:#6464a0;transform-origin:0 11.16px;transform:none;left:150.25800000000004px;width:800px;text-align:center;">=</div>
<div class="t" style="top:546.84px;font-size:12px;line-height:14px;color:#6464a0;transform-origin:0 11.16px;transform:none;left:192.01999999999998px;width:800px;text-align:center;">=</div>
<div class="t" style="top:546.84px;font-size:12px;line-height:14px;color:#6464a0;transform-origin:0 11.16px;transform:none;left:233.78200000000004px;width:800px;text-align:center;">=</div>
<div class="t" style="top:546.84px;font-size:12px;line-height:14px;color:#6464a0;transform-origin:0 11.16px;transform:none;left:275.544px;width:800px;text-align:center;">=</div>
<div class="t" style="top:546.84px;font-size:12px;line-height:14px;color:#6464a0;transform-origin:0 11.16px;transform:none;left:317.3059999999999px;width:800px;text-align:center;">=</div>
<div class="t" style="top:546.84px;font-size:12px;line-height:14px;color:#6464a0;transform-origin:0 11.16px;transform:none;left:359.068px;width:800px;text-align:center;">=</div>
<div class="t" style="top:546.84px;font-size:12px;line-height:14px;color:#6464a0;transform-origin:0 11.16px;transform:none;left:400.83000000000004px;width:800px;text-align:center;">=</div>
<div class="t" style="top:546.84px;font-size:12px;line-height:14px;color:#6464a0;transform-origin:0 11.16px;transform:none;left:442.592px;width:800px;text-align:center;">=</div>
<div class="t" style="top:546.84px;font-size:12px;line-height:14px;color:#6464a0;transform-origin:0 11.16px;transform:none;left:484.3539999999999px;width:800px;text-align:center;">=</div>
<div class="t" style="top:546.84px;font-size:12px;line-height:14px;color:#6464a0;transform-origin:0 11.16px;transform:none;left:526.116px;width:800px;text-align:center;">=</div>
<div class="t" style="top:560.00px;font-size:13px;line-height:15px;color:#0c640c;transform-origin:0 12.00px;right:798px;">Chicken</div>
<div class="t" style="top:561.84px;font-size:12px;line-height:14px;color:#6464a0;transform-origin:0 11.16px;transform:none;left:-225.6px;width:800px;text-align:center;">=</div>
<div class="t" style="top:561.84px;font-size:12px;line-height:14px;color:#6464a0;transform-origin:0 11.16px;transform:none;left:-183.838px;width:800px;text-align:center;">=</div>
<div class="t" style="top:561.84px;font-size:12px;line-height:14px;color:#6464a0;transform-origin:0 11.16px;transform:none;left:-142.07600000000002px;width:800px;text-align:center;">=</div>
<div class="t" style="top:561.84px;font-size:12px;line-height:14px;color:#6464a0;transform-origin:0 11.16px;transform:none;left:-100.31399999999996px;width:800px;text-align:center;">=</div>
<div class="t" style="top:561.84px;font-size:12px;line-height:14px;color:#6464a0;transform-origin:0 11.16px;transform:none;left:-58.55200000000002px;width:800px;text-align:center;">=</div>
<div class="t" style="top:561.84px;font-size:12px;line-height:14px;color:#6464a0;transform-origin:0 11.16px;transform:none;left:-16.789999999999964px;width:800px;text-align:center;">=</div>
<div class="t" style="top:561.84px;font-size:12px;line-height:14px;color:#6464a0;transform-origin:0 11.16px;transform:none;left:24.97199999999998px;width:800px;text-align:center;">=</div>
<div class="t" style="top:561.84px;font-size:12px;line-height:14px;color:#6464a0;transform-origin:0 11.16px;transform:none;left:66.73400000000004px;width:800px;text-align:center;">=</div>
<div class="t" style="top:561.84px;font-size:12px;line-height:14px;color:#6464a0;transform-origin:0 11.16px;transform:none;left:108.49599999999998px;width:800px;text-align:center;">=</div>
<div class="t" style="top:561.84px;font-size:12px;line-height:14px;color:#6464a0;transform-origin:0 11.16px;transform:none;left:150.25800000000004px;width:800px;text-align:center;">=</div>
<div class="t" style="top:561.84px;font-size:12px;line-height:14px;color:#6464a0;transform-origin:0 11.16px;transform:none;left:192.01999999999998px;width:800px;text-align:center;">=</div>
<div class="t" style="top:561.84px;font-size:12px;line-height:14px;color:#6464a0;transform-origin:0 11.16px;transform:none;left:233.78200000000004px;width:800px;text-align:center;">=</div>
<div class="t" style="top:561.84px;font-size:12px;line-height:14px;color:#6464a0;transform-origin:0 11.16px;transform:none;left:275.544px;width:800px;text-align:center;">=</div>
<div class="t" style="top:561.84px;font-size:12px;line-height:14px;color:#6464a0;transform-origin:0 11.16px;transform:none;left:317.3059999999999px;width:800px;text-align:center;">=</div>
<div class="t" style="top:561.84px;font-size:12px;line-height:14px;color:#6464a0;transform-origin:0 11.16px;transform:none;left:359.068px;width:800px;text-align:center;">=</div>
<div class="t" style="top:561.84px;font-size:12px;line-height:14px;color:#6464a0;transform-origin:0 11.16px;transform:none;left:400.83000000000004px;width:800px;text-align:center;">=</div>
<div class="t" style="top:561.84px;font-size:12px;line-height:14px;color:#6464a0;transform-origin:0 11.16px;transform:none;left:442.592px;width:800px;text-align:center;">=</div>
<div class="t" style="top:561.84px;font-size:12px;line-height:14px;color:#6464a0;transform-origin:0 11.16px;transform:none;left:484.3539999999999px;width:800px;text-align:center;">=</div>
<div class="t" style="top:561.84px;font-size:12px;line-height:14px;color:#6464a0;transform-origin:0 11.16px;transform:none;left:526.116px;width:800px;text-align:center;">=</div>
<div class="t" style="top:575.00px;font-size:13px;line-height:15px;color:#0c0c78;transform-origin:0 12.00px;right:798px;">X_tropicalis</div>
<div class="t" style="top:576.84px;font-size:12px;line-height:14px;color:#6464a0;transform-origin:0 11.16px;transform:none;left:-225.6px;width:800px;text-align:center;">=</div>
<div class="t" style="top:576.84px;font-size:12px;line-height:14px;color:#6464a0;transform-origin:0 11.16px;transform:none;left:-183.838px;width:800px;text-align:center;">=</div>
<div class="t" style="top:576.84px;font-size:12px;line-height:14px;color:#6464a0;transform-origin:0 11.16px;transform:none;left:-142.07600000000002px;width:800px;text-align:center;">=</div>
<div class="t" style="top:576.84px;font-size:12px;line-height:14px;color:#6464a0;transform-origin:0 11.16px;transform:none;left:-100.31399999999996px;width:800px;text-align:center;">=</div>
<div class="t" style="top:576.84px;font-size:12px;line-height:14px;color:#6464a0;transform-origin:0 11.16px;transform:none;left:-58.55200000000002px;width:800px;text-align:center;">=</div>
<div class="t" style="top:576.84px;font-size:12px;line-height:14px;color:#6464a0;transform-origin:0 11.16px;transform:none;left:-16.789999999999964px;width:800px;text-align:center;">=</div>
<div class="t" style="top:576.84px;font-size:12px;line-height:14px;color:#6464a0;transform-origin:0 11.16px;transform:none;left:24.97199999999998px;width:800px;text-align:center;">=</div>
<div class="t" style="top:576.84px;font-size:12px;line-height:14px;color:#6464a0;transform-origin:0 11.16px;transform:none;left:66.73400000000004px;width:800px;text-align:center;">=</div>
<div class="t" style="top:576.84px;font-size:12px;line-height:14px;color:#6464a0;transform-origin:0 11.16px;transform:none;left:108.49599999999998px;width:800px;text-align:center;">=</div>
<div class="t" style="top:576.84px;font-size:12px;line-height:14px;color:#6464a0;transform-origin:0 11.16px;transform:none;left:150.25800000000004px;width:800px;text-align:center;">=</div>
<div class="t" style="top:576.84px;font-size:12px;line-height:14px;color:#6464a0;transform-origin:0 11.16px;transform:none;left:192.01999999999998px;width:800px;text-align:center;">=</div>
<div class="t" style="top:576.84px;font-size:12px;line-height:14px;color:#6464a0;transform-origin:0 11.16px;transform:none;left:233.78200000000004px;width:800px;text-align:center;">=</div>
<div class="t" style="top:576.84px;font-size:12px;line-height:14px;color:#6464a0;transform-origin:0 11.16px;transform:none;left:275.544px;width:800px;text-align:center;">=</div>
<div class="t" style="top:576.84px;font-size:12px;line-height:14px;color:#6464a0;transform-origin:0 11.16px;transform:none;left:317.3059999999999px;width:800px;text-align:center;">=</div>
<div class="t" style="top:576.84px;font-size:12px;line-height:14px;color:#6464a0;transform-origin:0 11.16px;transform:none;left:359.068px;width:800px;text-align:center;">=</div>
<div class="t" style="top:576.84px;font-size:12px;line-height:14px;color:#6464a0;transform-origin:0 11.16px;transform:none;left:400.83000000000004px;width:800px;text-align:center;">=</div>
<div class="t" style="top:576.84px;font-size:12px;line-height:14px;color:#6464a0;transform-origin:0 11.16px;transform:none;left:442.592px;width:800px;text-align:center;">=</div>
<div class="t" style="top:576.84px;font-size:12px;line-height:14px;color:#6464a0;transform-origin:0 11.16px;transform:none;left:484.3539999999999px;width:800px;text-align:center;">=</div>
<div class="t" style="top:576.84px;font-size:12px;line-height:14px;color:#6464a0;transform-origin:0 11.16px;transform:none;left:526.116px;width:800px;text-align:center;">=</div>
<div class="t" style="top:590.00px;font-size:13px;line-height:15px;color:#0c640c;transform-origin:0 12.00px;right:798px;">Zebrafish</div>
<div class="t" style="top:591.84px;font-size:12px;line-height:14px;color:#6464a0;transform-origin:0 11.16px;transform:none;left:-225.6px;width:800px;text-align:center;">=</div>
<div class="t" style="top:591.84px;font-size:12px;line-height:14px;color:#6464a0;transform-origin:0 11.16px;transform:none;left:-183.838px;width:800px;text-align:center;">=</div>
<div class="t" style="top:591.84px;font-size:12px;line-height:14px;color:#6464a0;transform-origin:0 11.16px;transform:none;left:-142.07600000000002px;width:800px;text-align:center;">=</div>
<div class="t" style="top:591.84px;font-size:12px;line-height:14px;color:#6464a0;transform-origin:0 11.16px;transform:none;left:-100.31399999999996px;width:800px;text-align:center;">=</div>
<div class="t" style="top:591.84px;font-size:12px;line-height:14px;color:#6464a0;transform-origin:0 11.16px;transform:none;left:-58.55200000000002px;width:800px;text-align:center;">=</div>
<div class="t" style="top:591.84px;font-size:12px;line-height:14px;color:#6464a0;transform-origin:0 11.16px;transform:none;left:-16.789999999999964px;width:800px;text-align:center;">=</div>
<div class="t" style="top:591.84px;font-size:12px;line-height:14px;color:#6464a0;transform-origin:0 11.16px;transform:none;left:24.97199999999998px;width:800px;text-align:center;">=</div>
<div class="t" style="top:591.84px;font-size:12px;line-height:14px;color:#6464a0;transform-origin:0 11.16px;transform:none;left:66.73400000000004px;width:800px;text-align:center;">=</div>
<div class="t" style="top:591.84px;font-size:12px;line-height:14px;color:#6464a0;transform-origin:0 11.16px;transform:none;left:108.49599999999998px;width:800px;text-align:center;">=</div>
<div class="t" style="top:591.84px;font-size:12px;line-height:14px;color:#6464a0;transform-origin:0 11.16px;transform:none;left:150.25800000000004px;width:800px;text-align:center;">=</div>
<div class="t" style="top:591.84px;font-size:12px;line-height:14px;color:#6464a0;transform-origin:0 11.16px;transform:none;left:192.01999999999998px;width:800px;text-align:center;">=</div>
<div class="t" style="top:591.84px;font-size:12px;line-height:14px;color:#6464a0;transform-origin:0 11.16px;transform:none;left:233.78200000000004px;width:800px;text-align:center;">=</div>
<div class="t" style="top:591.84px;font-size:12px;line-height:14px;color:#6464a0;transform-origin:0 11.16px;transform:none;left:275.544px;width:800px;text-align:center;">=</div>
<div class="t" style="top:591.84px;font-size:12px;line-height:14px;color:#6464a0;transform-origin:0 11.16px;transform:none;left:317.3059999999999px;width:800px;text-align:center;">=</div>
<div class="t" style="top:591.84px;font-size:12px;line-height:14px;color:#6464a0;transform-origin:0 11.16px;transform:none;left:359.068px;width:800px;text-align:center;">=</div>
<div class="t" style="top:591.84px;font-size:12px;line-height:14px;color:#6464a0;transform-origin:0 11.16px;transform:none;left:400.83000000000004px;width:800px;text-align:center;">=</div>
<div class="t" style="top:591.84px;font-size:12px;line-height:14px;color:#6464a0;transform-origin:0 11.16px;transform:none;left:442.592px;width:800px;text-align:center;">=</div>
<div class="t" style="top:591.84px;font-size:12px;line-height:14px;color:#6464a0;transform-origin:0 11.16px;transform:none;left:484.3539999999999px;width:800px;text-align:center;">=</div>
<div class="t" style="top:591.84px;font-size:12px;line-height:14px;color:#6464a0;transform-origin:0 11.16px;transform:none;left:526.116px;width:800px;text-align:center;">=</div>
<div class="t" style="top:606.00px;font-size:13px;line-height:15px;color:#000;transform-origin:0 12.00px;letter-spacing:0.023px;left:441.08500000000004px;">Repeating Elements by RepeatMasker</div>
<div class="t" style="top:620.00px;font-size:13px;line-height:15px;color:#000;transform-origin:0 12.00px;right:798px;">RepeatMasker</div>
</div></body></html>
